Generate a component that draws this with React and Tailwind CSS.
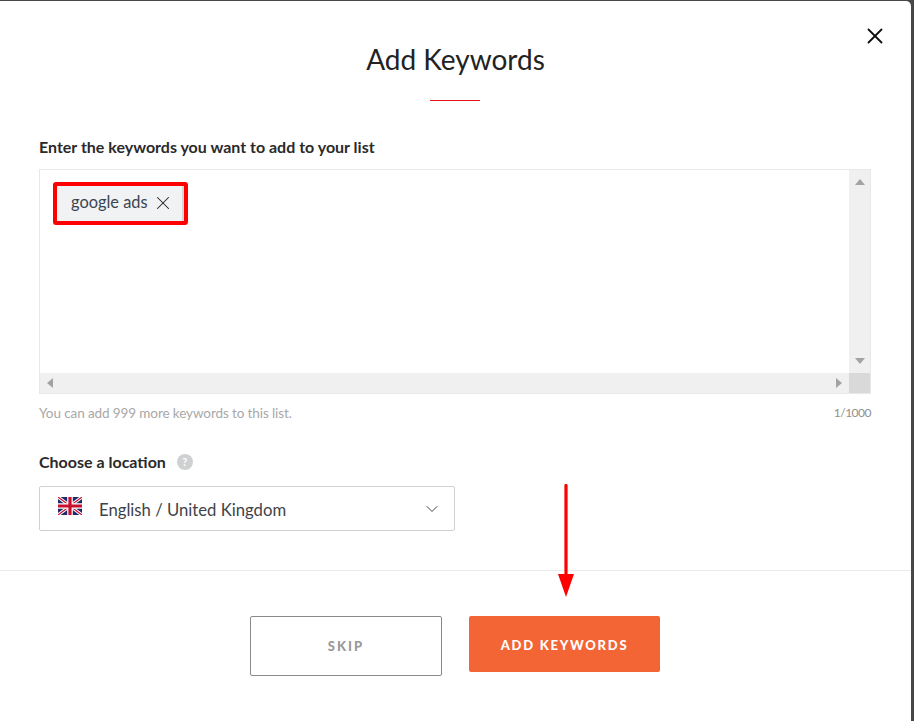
import { X, ChevronDown } from "lucide-react"

const UkFlag = () => (
  <svg width="24" height="18" viewBox="0 0 60 45" className="shrink-0">
    <rect width="60" height="45" fill="#1f2a6b" />
    <path d="M0 0l60 45M60 0L0 45" stroke="#fff" strokeWidth="8" />
    <path d="M0 0l60 45M60 0L0 45" stroke="#c8102e" strokeWidth="3" />
    <path d="M30 0v45M0 22.5h60" stroke="#fff" strokeWidth="14" />
    <path d="M30 0v45M0 22.5h60" stroke="#c8102e" strokeWidth="8" />
  </svg>
)

const ScrollArrow = ({ dir }) => {
  const points = {
    up: "0,7 5,1 10,7",
    down: "0,1 5,7 10,1",
    left: "7,0 1,5 7,10",
    right: "1,0 7,5 1,10",
  }
  const size = dir === "up" || dir === "down" ? "w-[10px] h-[8px]" : "w-[8px] h-[10px]"
  const box = dir === "up" || dir === "down" ? "0 0 10 8" : "0 0 8 10"
  return (
    <svg viewBox={box} className={size}>
      <polygon points={points[dir]} fill="#a3a3a3" />
    </svg>
  )
}

const App = () => {
  return (
    <div className="relative w-[914px] h-[721px] bg-[#474747] font-['Lato',sans-serif] text-[#262626] overflow-hidden">
      <div className="relative mt-px w-[911px] h-[720px] bg-white rounded-tr-[5px] flex flex-col">
        <button className="absolute top-[22px] right-[23px] text-[#111]">
          <X size={26} strokeWidth={1.7} />
        </button>

        <h1 className="mt-[41px] h-[34px] text-center text-[28px] leading-[34px] font-normal text-[#222]">
          Add Keywords
        </h1>
        <div className="mt-[24px] ml-[430px] w-[50px] h-px bg-[#e8111a]" />

        <div className="mt-[36px] px-[39px] w-[910px]">
          <label className="block h-[20px] text-[16px] leading-[20px] font-bold text-[#2a2a2a]">
            Enter the keywords you want to add to your list
          </label>

          <div className="mt-[12px] w-[832px] h-[225px] border border-[#e8e8e8] flex flex-col">
            <div className="flex flex-1 min-h-0">
              <div className="flex-1 pt-[12px] pl-[13px]">
                <div className="inline-flex items-center w-[135px] h-[43px] border-[4px] border-[#ff0000] rounded-[3px]">
                  <div className="flex items-center gap-[4px] w-full h-full pb-[2px] bg-[#f0f2f4] border-r-2 border-[#d4d6d8] pl-[14px] text-[16.4px] text-[#3a4550] whitespace-nowrap">
                    google ads
                    <X size={22} strokeWidth={1.1} className="text-[#222] shrink-0" />
                  </div>
                </div>
              </div>
              <div className="w-[21px] bg-[#f0f0f0] flex flex-col items-center justify-between pt-[8px] pb-[8px]">
                <ScrollArrow dir="up" />
                <ScrollArrow dir="down" />
              </div>
            </div>
            <div className="flex h-[20px] bg-[#f0f0f0]">
              <div className="flex-1 flex items-center justify-between pl-[6px] pr-[6px]">
                <ScrollArrow dir="left" />
                <ScrollArrow dir="right" />
              </div>
              <div className="w-[21px] bg-[#d9d9d9]" />
            </div>
          </div>

          <div className="mt-[10px] w-[832px] flex justify-between text-[13.5px] leading-[18px] tracking-[-0.1px] text-[#a8a8a8]">
            <span>You can add 999 more keywords to this list.</span>
            <span className="text-[12px] tracking-[-0.5px] text-[#8f8f8f]">1/1000</span>
          </div>

          <div className="mt-[30px] flex items-center h-[20px]">
            <span className="text-[16px] leading-[20px] font-bold text-[#2a2a2a]">Choose a location</span>
            <span className="ml-[11px] w-[16px] h-[16px] rounded-full bg-[#cfd0d1] text-white text-[11px] font-bold flex items-center justify-center">
              ?
            </span>
          </div>

          <div className="mt-[14px] w-[416px] h-[45px] border border-[#cdd2d4] rounded-[2px] flex items-center pl-[18px] pr-[12px]">
            <div className="-mt-[5px]">
              <UkFlag />
            </div>
            <span className="ml-[17px] pt-[4px] flex-1 text-[16.7px] text-[#3f4347]">English / United Kingdom</span>
            <ChevronDown size={20} strokeWidth={1.1} className="text-[#333]" />
          </div>
        </div>

        <div className="mt-[39px] h-px bg-[#e9ecec]" />

        <div className="mt-[45px] pl-[250px] flex items-start gap-[27px]">
          <button className="w-[192px] h-[60px] pt-[2px] border border-[#8a8a8a] rounded-[2px] text-[13px] font-black tracking-[2px] text-[#999]">
            SKIP
          </button>
          <button className="w-[191px] h-[56px] pt-[3px] bg-[#f46536] rounded-[2px] text-[13px] font-black tracking-[1.75px] text-white">
            ADD KEYWORDS
          </button>
        </div>
      </div>

      <svg className="absolute left-[556px] top-[484px]" width="20" height="114" viewBox="0 0 20 114">
        <path d="M10 1.5V92" stroke="#ff0000" strokeWidth="3.2" strokeLinecap="round" />
        <polygon points="2,90 18,90 10,113" fill="#ff0000" />
      </svg>
    </div>
  )
}

export default App
